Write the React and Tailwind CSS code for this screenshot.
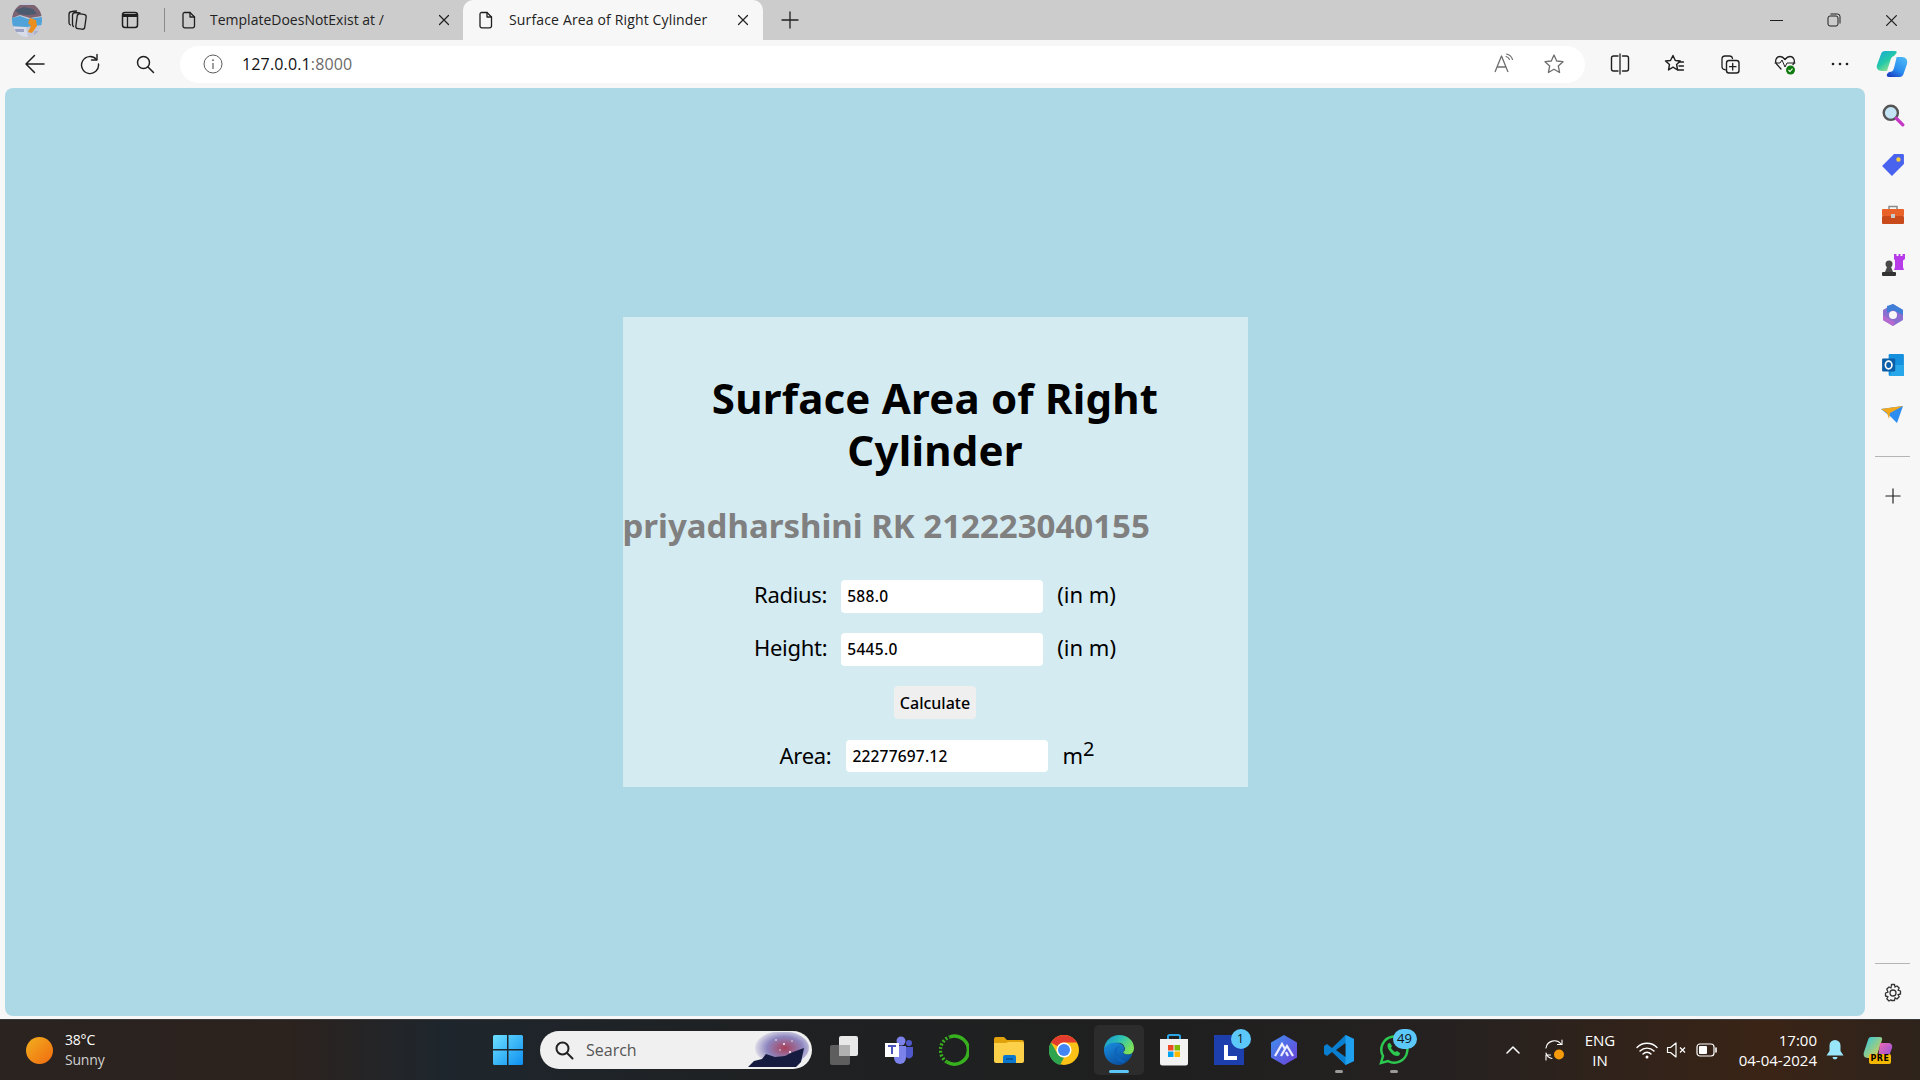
import React from "react";

const S = ({ w = 20, h = 20, vb = "0 0 20 20", children, className = "" }) => (
  <svg width={w} height={h} viewBox={vb} fill="none" className={className}>{children}</svg>
);
const line = { stroke: "#1f1f1f", strokeWidth: 1.3, strokeLinecap: "round", strokeLinejoin: "round" };

const Avatar = () => (
  <S w={30} h={34} vb="0 0 30 34">
    <defs><clipPath id="avc"><ellipse cx="15" cy="17" rx="15" ry="17" /></clipPath></defs>
    <g clipPath="url(#avc)">
      <rect width="30" height="34" fill="#c3c8d8" />
      <path d="M0 2h30v11L18 15 8 12 0 15Z" fill="#7d6372" />
      <path d="M3 7l9-3 9 2 4 5-10 1-8-1Z" fill="#4b5a6e" />
      <path d="M0 15l8-2 8 3 14-2v8L14 24 0 23Z" fill="#4fa3d8" />
      <path d="M18 15l6 2 1 6-5 7-4-1 3-6-3-3Z" fill="#ea8f1f" />
      <path d="M0 24h14l2 10H0Z" fill="#d8dbe8" />
      <path d="M3 26h9v3H3z" fill="#9aa3c4" />
      <path d="M22 28h8v6h-8z" fill="#aab0cc" />
    </g>
  </S>
);
const Collections = () => (
  <S w={24} h={24} vb="0 0 24 24">
    <rect x="11.500" y="6" width="9" height="15" rx="2.500" transform="rotate(8 16 13.500)" {...line} />
    <path d="M8.500 18.500A2.500 2.500 0 0 1 7.500 16.500V7A3 3 0 0 1 10.500 4.500L15 5" {...line} />
    <path d="M5.500 17A2.500 2.500 0 0 1 4 15V6.500A3 3 0 0 1 7 3.500L11.500 3" {...line} />
  </S>
);
const VTabs = () => (
  <S>
    <rect x="2.500" y="2.500" width="15" height="15" rx="2.500" {...line} strokeWidth="1.500" />
    <path d="M3 4h14v3H3z" fill="#1f1f1f" />
    <path d="M7.500 7v10" {...line} />
  </S>
);
const Doc = () => (
  <S>
    <path d="M5 2.500h6l4.500 4.500v9a1.800 1.800 0 0 1-1.800 1.800H5.800A1.800 1.800 0 0 1 4 16V4.300A1.800 1.800 0 0 1 5 2.500Z" {...line} />
    <path d="M11 2.500V7h4.500" {...line} />
  </S>
);
const X = ({ s = 12, c = "#1f1f1f" }) => (
  <S w={s} h={s} vb="0 0 12 12"><path d="M1.500 1.500l9 9M10.500 1.500l-9 9" stroke={c} strokeWidth="1.200" strokeLinecap="round" /></S>
);
const Plus = ({ s = 18 }) => (
  <S w={s} h={s} vb="0 0 18 18"><path d="M9 1v16M1 9h16" stroke="#1f1f1f" strokeWidth="1.300" strokeLinecap="round" /></S>
);
const Back = () => (
  <S w={22} h={22} vb="0 0 22 22"><path d="M20 11H2.500M10.500 2.500L2 11l8.500 8.500" {...line} strokeWidth="1.500" /></S>
);
const Reload = () => (
  <S w={22} h={22} vb="0 0 22 22"><path d="M17.500 6.500A8.500 8.500 0 1 0 19.500 11" {...line} strokeWidth="1.400" /><path d="M18 1.500v5.500h-5.500" {...line} strokeWidth="1.400" /></S>
);
const Search = ({ s = 20, c = "#1f1f1f", sw = 1.500 }) => (
  <S w={s} h={s} vb="0 0 20 20"><circle cx="8.500" cy="8.500" r="6" stroke={c} strokeWidth={sw} /><path d="M13 13l5.500 5.500" stroke={c} strokeWidth={sw} strokeLinecap="round" /></S>
);
const Info = () => (
  <S><circle cx="10" cy="10" r="9" stroke="#5c5c5c" strokeWidth="1" /><path d="M10 9v6" stroke="#5c5c5c" strokeWidth="1.200" /><circle cx="10" cy="6.200" r=".9" fill="#5c5c5c" /></S>
);
const ReadAloud = () => (
  <S w={22} h={22} vb="0 0 22 22">
    <path d="M2 19L8.500 3 15 19M4.500 14h8" stroke="#6e6e6e" strokeWidth="1.300" strokeLinejoin="round" />
    <path d="M13 3.500a5 5 0 0 1 3.500 3M13.500 1a8 8 0 0 1 6 5.500" stroke="#6e6e6e" strokeWidth="1.100" strokeLinecap="round" />
  </S>
);
const Star = ({ c = "#6e6e6e" }) => (
  <S w={22} h={22} vb="0 0 22 22"><path d="M11 2l2.700 6 6.300.7-4.700 4.300 1.300 6.500L11 16.200 5.400 19.500l1.300-6.500L2 8.700 8.300 8Z" stroke={c} strokeWidth="1.300" strokeLinejoin="round" /></S>
);
const Split = () => (
  <S w={22} h={22} vb="0 0 22 22"><path d="M9 3H4.500A2 2 0 0 0 2.500 5v11a2 2 0 0 0 2 2H9M13.500 3h4a2 2 0 0 1 2 2v11a2 2 0 0 1-2 2h-4" {...line} strokeWidth="1.400" /><path d="M11 1v20" {...line} /></S>
);
const Fav = () => (
  <S w={22} h={22} vb="0 0 22 22"><path d="M9 2.500l2.300 5 5 .5-3.700 3.500 1 5.500-4.600-2.800L4.500 17l1-5.500L1.500 8l5-.5Z" {...line} strokeWidth="1.400" /><path d="M14.500 9h5M15 13h4.500M14 17h5.500" {...line} /></S>
);
const Coll = () => (
  <S w={22} h={22} vb="0 0 22 22"><path d="M7 17l-1.500-.5A3 3 0 0 1 3 13V6a3 3 0 0 1 3-3h4.500a3 3 0 0 1 3 2.500" {...line} /><rect x="7.500" y="7.500" width="12.500" height="12.500" rx="2.500" {...line} strokeWidth="1.400" /><path d="M13.700 10.500v6.500M10.500 13.700H17" {...line} /></S>
);
const Heart = () => (
  <S w={24} h={24} vb="0 0 24 24">
    <path d="M8 17L4 12.500C1 9 3.500 4.500 7 4.500c2 0 3.500 1 5 3 1.500-2 3-3 5-3 3.500 0 6 4.500 3 8" {...line} />
    <path d="M2 11h5l2-3 3 7 2-4h8" {...line} strokeWidth="1" />
    <circle cx="17.500" cy="18" r="4.500" fill="#107c10" />
    <path d="M15.500 18l1.500 1.500 2.500-2.800" stroke="#fff" strokeWidth="1.100" />
  </S>
);
const Dots = () => (
  <S w={20} h={6} vb="0 0 20 6"><circle cx="3" cy="3" r="1.300" fill="#1f1f1f" /><circle cx="10" cy="3" r="1.300" fill="#1f1f1f" /><circle cx="17" cy="3" r="1.300" fill="#1f1f1f" /></S>
);
const CopilotIcon = () => (
  <S w={32} h={28} vb="0 0 32 28">
    <defs>
      <linearGradient id="cpa" x1="0" y1="0" x2="0.7" y2="1"><stop offset="0" stopColor="#1aa5dc" /><stop offset=".55" stopColor="#24c9a8" /><stop offset="1" stopColor="#a8e48a" /></linearGradient>
      <linearGradient id="cpb" x1="0.8" y1="0" x2="0.2" y2="1"><stop offset="0" stopColor="#4bb8f5" /><stop offset=".6" stopColor="#2a8cf0" /><stop offset="1" stopColor="#1c3fc0" /></linearGradient>
    </defs>
    <path d="M9 1h10c1.500 0 2 .8 1.500 2L18 6c-2 .5-3 2-3.500 4L11 21H6C2 21 0 18 1 15L5 4c.6-2 2-3 4-3Z" fill="url(#cpa)" />
    <path d="M21 7h5c4 0 6 3 5 7l-3.500 10c-.7 2-2 3-4 3H13c-2 0-2.500-1-2-3l2-2c3 0 4-1 5-4l2-8c.2-1.500.5-3 1-3Z" fill="url(#cpb)" />
  </S>
);

const WinLogo = () => (
  <S w={30} h={30} vb="0 0 30 30">
    <defs><linearGradient id="wl" x1="0" y1="0" x2="1" y2="1"><stop offset="0" stopColor="#6de0ff" /><stop offset="1" stopColor="#0d8ff0" /></linearGradient></defs>
    <path d="M1.500 0H14v14H0V1.500A1.500 1.500 0 0 1 1.500 0ZM15.500 0H28.500A1.500 1.500 0 0 1 30 1.500V14H15.500ZM0 15.500H14V30H1.500A1.500 1.500 0 0 1 0 28.500ZM15.500 15.500H30V28.500A1.500 1.500 0 0 1 28.500 30H15.500Z" fill="url(#wl)" />
  </S>
);
const SearchArt = () => (
  <S w={64} h={36} vb="0 0 64 36">
    <defs><radialGradient id="sa" cx=".55" cy=".5" r=".6"><stop offset="0" stopColor="#a8405a" /><stop offset=".55" stopColor="#8d86c0" /><stop offset="1" stopColor="#f0f0f0" /></radialGradient></defs>
    <ellipse cx="36" cy="16" rx="27" ry="17" fill="url(#sa)" />
    <path d="M2 35l6-6 8-2 4-5 9 3 10-1 8-4 11-4-3 14-5 5Z" fill="#151c3f" />
    <g fill="#fff"><circle cx="30" cy="8" r=".8" /><circle cx="38" cy="12" r="1" /><circle cx="44" cy="20" r="1" /><circle cx="46" cy="9" r=".7" /><circle cx="34" cy="18" r=".7" /></g>
  </S>
);
const TaskView = () => (
  <S w={30} h={30} vb="0 0 30 30">
    <rect x="1" y="10" width="20" height="20" rx="2" fill="#5e5e5e" />
    <rect x="10" y="1" width="19" height="20" rx="2" fill="#e8e8e8" />
    <rect x="10" y="10" width="11" height="11" fill="#b0b0b0" />
  </S>
);
const Teams = () => (
  <S w={30} h={30} vb="0 0 30 30">
    <circle cx="17" cy="6" r="4.500" fill="#7b83eb" /><circle cx="25" cy="8" r="3" fill="#5059c9" />
    <path d="M10 11h12v12a6 6 0 0 1-12 0Z" fill="#7b83eb" /><path d="M22 12h7v8a4 4 0 0 1-7 2Z" fill="#5059c9" />
    <rect x="1" y="8" width="14" height="14" fill="#fff" />
    <path d="M4 11h8M8 11v8" stroke="#4b53bc" strokeWidth="2" />
  </S>
);
const Ring = () => (
  <S w={30} h={32} vb="0 0 30 32">
    <path d="M11 2.800A14 14 0 1 1 8 28" stroke="#38b11f" strokeWidth="3.500" />
    <path d="M8 28A14 14 0 0 1 11 2.800" stroke="#38b11f" strokeWidth="3.500" strokeDasharray="2 1.800" />
  </S>
);
const Folder = () => (
  <S w={30} h={30} vb="0 0 30 30">
    <path d="M0 4a2 2 0 0 1 2-2h8l3 3h15a2 2 0 0 1 2 2v4H0Z" fill="#e0a10a" />
    <path d="M0 8h12l2-1h14a2 2 0 0 1 2 2v17a2 2 0 0 1-2 2H2a2 2 0 0 1-2-2Z" fill="#fdd04a" />
    <path d="M9 28v-6a2 2 0 0 1 2-2h9a2 2 0 0 1 2 2v6Z" fill="#0a78d0" /><path d="M12 24h7" stroke="#063a70" strokeWidth="1" />
  </S>
);
const Chrome = () => (
  <S w={30} h={30} vb="0 0 30 30">
    <circle cx="15" cy="15" r="15" fill="#fbc117" />
    <path d="M15 0A15 15 0 0 1 28 7.500H15A7.500 7.500 0 0 0 8.500 11.300L2 7.500A15 15 0 0 1 15 0Z" fill="#e33b2e" />
    <path d="M2 7.500l6.500 11.300A7.500 7.500 0 0 0 15 22.500L11 30A15 15 0 0 1 2 7.500Z" fill="#2fa44f" />
    <circle cx="15" cy="15" r="7.500" fill="#fff" /><circle cx="15" cy="15" r="6" fill="#4285f4" />
  </S>
);
const Edge = () => (
  <S w={30} h={30} vb="0 0 30 30">
    <defs>
      <linearGradient id="eg" x1="0" y1="0" x2="1" y2="0.5"><stop offset="0" stopColor="#1490d8" /><stop offset=".55" stopColor="#2fc4b0" /><stop offset="1" stopColor="#7be05a" /></linearGradient>
      <linearGradient id="ed" x1="0" y1="0" x2="0.6" y2="1"><stop offset="0" stopColor="#1a8fe0" /><stop offset="1" stopColor="#0a4f9e" /></linearGradient>
    </defs>
    <path d="M0 14C1 5 8 0 15 0c9 0 15 6 15 13 0 3-1.500 6-5 6.500-3 .4-6-.8-6-2.500 2-1 2.500-3 1.500-5C19 8 15 7 10 8.500 5 10 1.500 12 0 14Z" fill="url(#eg)" />
    <path d="M0 14c2-4 7-7 12-6.500 4 .4 7 2 8 4.500 1 2 .3 4-1 5-.5 1 3 3 6 2.500 1.500 0 2.500-.5 3.500-1.300C27 24 21 30 15 30 6 30-.5 23 0 14Z" fill="url(#ed)" />
    <path d="M10.500 17c0-4 3-6 6-5.500-3.500 1-4.500 4-3 8 1 3 4 6 8 7.500-7 2-11-5-11-10Z" fill="#0d65bd" />
  </S>
);
const Store = () => (
  <S w={30} h={32} vb="0 0 30 32">
    <path d="M9 5V2.500A1.500 1.500 0 0 1 10.500 1h9A1.500 1.500 0 0 1 21 2.500V5" stroke="#2aa5e6" strokeWidth="2" />
    <path d="M1 5h28v24a2.500 2.500 0 0 1-2.500 2.500h-23A2.500 2.500 0 0 1 1 29Z" fill="#f2f2f2" />
    <rect x="9" y="11" width="5.500" height="5.500" fill="#ea4a25" /><rect x="15.500" y="11" width="5.500" height="5.500" fill="#7fb900" />
    <rect x="9" y="17.500" width="5.500" height="5.500" fill="#00a3ee" /><rect x="15.500" y="17.500" width="5.500" height="5.500" fill="#ffb900" />
  </S>
);
const Mountain = () => (
  <S w={30} h={32} vb="0 0 30 32">
    <defs><linearGradient id="mt" x1="0" y1="0" x2="1" y2="1"><stop offset="0" stopColor="#3f8ff0" /><stop offset="1" stopColor="#6d3fd8" /></linearGradient></defs>
    <path d="M15 1l13 7.500v15L15 31 2 23.500v-15Z" fill="url(#mt)" />
    <path d="M6 22l7-12 3 5M12 22l4-7 2-3 6 10M19 22l-2-4" stroke="#eef" strokeWidth="2.200" />
  </S>
);
const VSCode = () => (
  <S w={30} h={30} vb="0 0 30 30">
    <path d="M21.500 0L30 4v22l-8.500 4L8 17l-5 4-3-2v-8l3-2 5 4Z" fill="#0a7fd0" />
    <path d="M21.500 0L30 4v22l-8.500 4Z" fill="#1fa0ee" />
    <path d="M21.500 8v14L12 15Z" fill="#1f1f1f" />
  </S>
);
const Whats = () => (
  <S w={30} h={30} vb="0 0 30 30">
    <path d="M2 28l2-7A13 13 0 1 1 9 26Z" stroke="#2cc84f" strokeWidth="2.500" />
    <path d="M10 8c-2 1-2 4 0 7 2 3 5 6 8 6 2 0 3-1 3-3l-3-2-2 1c-2-1-3-3-4-4l1-2-2-3Z" fill="#2cc84f" />
  </S>
);
const Wifi = () => (
  <S w={22} h={18} vb="0 0 22 18"><path d="M1 6.500a14 14 0 0 1 20 0M4 10a10 10 0 0 1 14 0M7 13a5.500 5.500 0 0 1 8 0" stroke="#fff" strokeWidth="1.400" strokeLinecap="round" /><circle cx="11" cy="16" r="1.500" fill="#fff" /></S>
);
const Mute = () => (
  <S w={22} h={18} vb="0 0 22 18"><path d="M1.500 6.500h3L10 2v14l-5.500-4.500h-3Z" stroke="#fff" strokeWidth="1.200" strokeLinejoin="round" /><path d="M14 6.500l5 5M19 6.500l-5 5" stroke="#fff" strokeWidth="1.200" /></S>
);
const Batt = () => (
  <S w={22} h={16} vb="0 0 22 16"><rect x="1" y="2" width="17" height="12" rx="3" stroke="#fff" strokeWidth="1.200" /><rect x="3" y="4" width="8" height="8" rx="1" fill="#fff" /><path d="M20 6v4" stroke="#fff" strokeWidth="1.600" strokeLinecap="round" /></S>
);
const Sync = () => (
  <S w={22} h={24} vb="0 0 22 24">
    <path d="M2 10A8.500 8.500 0 0 1 17 6M18 2v4.500h-4.500M2 15a8 8 0 0 0 6 5.500M2 22v-5h4.500" stroke="#fff" strokeWidth="1.100" strokeLinecap="round" />
    <circle cx="15" cy="16.500" r="5" fill="#f59a0a" />
  </S>
);
const Bell = () => (
  <S w={18} h={20} vb="0 0 18 20"><path d="M9 0a5.500 5.500 0 0 1 5.500 5.500V11l3 4.500H.500l3-4.500V5.500A5.500 5.500 0 0 1 9 0Z" fill="#99e6fb" /><path d="M6.500 17h5a2.500 2.500 0 0 1-5 0Z" fill="#99e6fb" /></S>
);
const CopilotPre = () => (
  <div className="relative w-[30px] h-[28px]">
    <S w={30} h={24} vb="0 0 30 24">
      <defs>
        <linearGradient id="cq" x1="0" y1="0" x2="1" y2="1"><stop offset="0" stopColor="#28c7e8" /><stop offset="1" stopColor="#f0d03a" /></linearGradient>
        <linearGradient id="cr" x1="0" y1="0" x2="1" y2="1"><stop offset="0" stopColor="#f06ab0" /><stop offset="1" stopColor="#8a50e0" /></linearGradient>
      </defs>
      <path d="M8 1h9c2 0 2.500 1.500 2 3l-5 15c-.5 1.500-1.500 3-3.500 3H5c-4 0-5-3-4-6L5 4c.5-2 1.500-3 3-3Z" fill="url(#cq)" />
      <path d="M17 7h8c3 0 5 2 4 5l-3 8c-.5 2-2 3-4 3h-7Z" fill="url(#cr)" />
    </S>
    <div className="absolute left-[6px] bottom-0 w-[22px] h-[10px] rounded-[2px] bg-[#f5b800] text-[8px] leading-[10px] font-bold text-black text-center tracking-[0.5px] font-['DejaVu_Sans',sans-serif]">PRE</div>
  </div>
);

const SideIcons = [
  <S w={24} h={24} vb="0 0 22 22" key="a"><circle cx="9" cy="9" r="6.500" fill="#c3e4f5" stroke="#555" strokeWidth="2.200" /><path d="M14 14l6 6" stroke="#c436c4" strokeWidth="3" strokeLinecap="round" /></S>,
  <S w={24} h={24} vb="0 0 22 22" key="b"><path d="M12 1h8a1 1 0 0 1 1 1v8L10 21 1 12Z" fill="#4a63ee" /><circle cx="16" cy="6" r="2" fill="#f6cf3a" /></S>,
  <S w={24} h={22} vb="0 0 24 22" key="c"><path d="M8 5V2.500h8V5" stroke="#8a8a8a" strokeWidth="1.500" /><rect x="1" y="5" width="22" height="7" rx="1" fill="#e8622a" /><rect x="1" y="12" width="22" height="8" rx="1" fill="#c94a1a" /><rect x="10" y="10" width="4" height="4" fill="#c9c9c9" /></S>,
  <S w={24} h={24} vb="0 0 24 24" key="d"><path d="M13 1h2.500v2h2V1h2v2h2V1H24v5l-2 1.500V14l1 3H13l1-3V7.500L13 6Z" fill="#b73be8" /><circle cx="8" cy="11" r="3.500" fill="#4a4a4a" /><path d="M6 14h4l2 5H4Z" fill="#4a4a4a" /><rect x="1" y="19" width="14" height="4" rx="1" fill="#333" /></S>,
  <S w={24} h={24} vb="0 0 22 24" key="e"><path d="M11 1l10 6v10l-10 6L1 17V7Z" fill="#8a6fd0" /><path d="M11 1l10 6v5L11 7 5 10V3Z" fill="#3f7fd8" /><path d="M1 12l6 4 6 3-2 4-10-6Z" fill="#b66ad0" /><circle cx="11" cy="12" r="4" fill="#f7f7f7" /></S>,
  <S w={24} h={24} vb="0 0 22 22" key="f"><rect x="7" y="1" width="14" height="20" rx="1" fill="#1490df" /><path d="M12 11h9v10H8Z" fill="#28a8ea" /><rect x="1" y="5" width="12" height="12" rx="1" fill="#0a5fa8" /><ellipse cx="7" cy="11" rx="3" ry="3.500" stroke="#fff" strokeWidth="1.500" /></S>,
  <S w={24} h={20} vb="0 0 24 20" key="g"><path d="M0 4l22-3-6 17-6-6Z" fill="#2e8df0" /><path d="M0 4l22-3L9 8l-1 6-2-6Z" fill="#f3a81c" /></S>,
];

const Slot = ({ w, children, className = "" }) => (
  <div style={{ width: w }} className={`flex items-center justify-center shrink-0 ${className}`}>{children}</div>
);

const Badge = ({ children, className = "" }) => (
  <div className={`absolute bg-[#5cc8fa] rounded-full h-[20px] flex items-center justify-center text-[12px] text-[#111] font-['Open_Sans',sans-serif] ${className}`}>{children}</div>
);

const Row = ({ label, value, unit }) => (
  <div className="flex items-center justify-center h-[32px] text-[#000] text-[22px]">
    <span className="-mt-[4px] tracking-[-0.3px]">{label}</span>
    <div className="ml-[14px] w-[202px] h-[33px] bg-white rounded-[4px] flex items-center pl-[6px] pt-[1px] text-[15.5px] tracking-[0.3px] font-medium">{value}</div>
    <span className="ml-[14px] -mt-[4px]">{unit}</span>
  </div>
);

export default function App() {
  return (
    <div className="w-[1920px] h-[1080px] overflow-hidden flex flex-col bg-[#f7f7f7] font-['Open_Sans',sans-serif]">
      {/* tab strip */}
      <div className="h-[40px] bg-[#cccccc] flex items-center shrink-0 relative">
        <Slot w={54}><Avatar /></Slot>
        <Slot w={46}><Collections /></Slot>
        <Slot w={60}><VTabs /></Slot>
        <div className="w-px h-[24px] bg-[#8a8a8a] ml-[4px]" />
        <div className="w-[296px] h-full flex items-center pl-[14px] text-[14px] text-[#222] -mt-[1px]">
          <Doc /><span className="ml-[11px]">TemplateDoesNotExist at /</span>
          <span className="ml-auto mr-[11px]"><X /></span>
        </div>
        <div className="w-[300px] h-full flex items-center pl-[13px] ml-[2px] bg-[#f7f7f7] rounded-t-[10px] text-[14px] text-[#222] tracking-[0.15px]">
          <Doc /><span className="ml-[13px] -mt-[1px]">Surface Area of Right Cylinder</span>
          <span className="ml-auto mr-[14px]"><X /></span>
        </div>
        <div className="ml-[18px]"><Plus /></div>
        <div className="ml-auto flex items-center">
          <Slot w={57}><div className="w-[13px] h-px bg-[#1f1f1f]" /></Slot>
          <Slot w={57}>
            <S w={14} h={14} vb="0 0 14 14"><rect x="1" y="3" width="10" height="10" rx="2" stroke="#1f1f1f" strokeWidth="1" /><path d="M3.500 1h7a2.500 2.500 0 0 1 2.500 2.500v7" stroke="#1f1f1f" strokeWidth="1" /></S>
          </Slot>
          <Slot w={58}><X s={13} /></Slot>
        </div>
      </div>

      {/* toolbar */}
      <div className="h-[48px] flex items-center shrink-0 pl-[7px]">
        <Slot w={55}><Back /></Slot>
        <Slot w={56}><Reload /></Slot>
        <Slot w={54}><Search /></Slot>
        <div className="ml-[8px] w-[1405px] h-[37px] bg-white rounded-full flex items-center pl-[23px] pr-[20px]">
          <Info />
          <span className="ml-[19px] text-[16px] tracking-[0.15px] text-[#111] -mt-[1px]">127.0.0.1<span className="text-[#6b6b6b]">:8000</span></span>
          <div className="ml-auto flex items-center gap-[28px]"><ReadAloud /><Star /></div>
        </div>
        <div className="ml-[7px] flex items-center">
          <Slot w={55}><Split /></Slot>
          <Slot w={55}><Fav /></Slot>
          <Slot w={55}><Coll /></Slot>
          <Slot w={55}><Heart /></Slot>
          <Slot w={55}><Dots /></Slot>
          <Slot w={50}><CopilotIcon /></Slot>
        </div>
      </div>

      {/* content + sidebar */}
      <div className="flex-1 flex min-h-0">
        <div className="ml-[5px] w-[1860px] h-[928px] bg-[#add8e6] rounded-[8px] flex items-center justify-center font-['Noto_Sans',sans-serif]">
          <div className="w-[625px] h-[470px] bg-[#d5ebf2] pt-[55px] flex flex-col">
            <h1 className="text-[42px] leading-[52px] font-bold text-black text-center px-[60px] tracking-[0.2px]">Surface Area of Right Cylinder</h1>
            <h2 className="mt-[30px] text-[33px] leading-[40px] font-bold text-[#808080]">priyadharshini RK 212223040155</h2>
            <div className="mt-[34px] flex flex-col gap-[21px]">
              <Row label="Radius:" value="588.0" unit="(in m)" />
              <Row label="Height:" value="5445.0" unit="(in m)" />
              <div className="flex justify-center">
                <div className="w-[82px] h-[33px] bg-[#efefef] rounded-[4px] flex items-center justify-center text-[16px] font-medium text-black">Calculate</div>
              </div>
              <div className="flex items-center justify-center h-[32px] pl-[4px] text-black text-[22px]">
                <span className="-mt-[1px] tracking-[-0.3px]">Area:</span>
                <div className="ml-[15px] w-[202px] h-[32px] bg-white rounded-[4px] flex items-center pl-[6px] pt-[1px] text-[15.5px] tracking-[0.2px] font-medium">22277697.12</div>
                <span className="ml-[14px] -mt-[1px]">m<sup className="text-[20px] leading-none relative -top-[8px] align-baseline">2</sup></span>
              </div>
            </div>
          </div>
        </div>
        <div className="w-[55px] flex flex-col items-center">
          <div className="h-[931px] flex flex-col items-center pt-[2px]">
            {SideIcons.map((ic, i) => (
              <div key={i} className="h-[50px] w-[55px] flex items-center justify-center">{ic}</div>
            ))}
            <div className="mt-[16px] w-[35px] h-px bg-[#b5b5b5]" />
            <div className="mt-[31px]"><Plus s={16} /></div>
            <div className="mt-auto w-[35px] h-px bg-[#b5b5b5]" />
            <div className="mt-[19px] mb-[16px]">
              <S w={20} h={20} vb="0 0 20 20"><circle cx="10" cy="10" r="3" stroke="#333" strokeWidth="1.300" /><path d="M8.500 1.500h3l.5 2.500 2-1 2.200 2-1.200 2.200 2.500.8v3l-2.500.6 1.200 2.200-2.200 2.200-2-1.200-.5 2.700h-3L8 16.800l-2 1.200-2.200-2.200 1.200-2.200-2.500-.6v-3l2.500-.8L3.800 6l2.200-2 2 1Z" stroke="#333" strokeWidth="1.300" strokeLinejoin="round" /></S>
            </div>
          </div>
        </div>
      </div>

      {/* taskbar */}
      <div className="h-[61px] shrink-0 border-t border-[#3a3a3a] flex items-center text-white bg-[linear-gradient(90deg,#2a2320_0%,#2c221e_15%,#1e262d_23%,#1f2122_40%,#1f1f1f_60%,#252120_75%,#3a2416_92%,#2e231c_100%)]">
        <div className="ml-[26px] w-[27px] h-[27px] rounded-full bg-[linear-gradient(135deg,#f2b01e,#f06a10)] shrink-0" />
        <div className="ml-[12px] w-[428px] text-[14px] leading-[20px] shrink-0">
          <div className="tracking-[-0.2px]">38°C</div>
          <div className="text-[#d0d0d0] tracking-[-0.2px]">Sunny</div>
        </div>
        <div className="shrink-0"><WinLogo /></div>
        <div className="ml-[17px] w-[272px] h-[38px] bg-[#f0f0f0] rounded-full flex items-center pl-[14px] text-[16px] text-[#555] overflow-hidden shrink-0">
          <Search s={20} c="#222" sw={2} />
          <span className="ml-[12px]">Search</span>
          <span className="ml-auto mr-[2px]"><SearchArt /></span>
        </div>
        <Slot w={58} className="ml-[3px]"><TaskView /></Slot>
        <Slot w={55} className="ml-[-2px]"><Teams /></Slot>
        <Slot w={55}><Ring /></Slot>
        <Slot w={55}><Folder /></Slot>
        <Slot w={55}><Chrome /></Slot>
        <Slot w={55}>
          <div className="relative w-[50px] h-[50px] rounded-[5px] bg-[#2c2c2c] flex items-center justify-center">
            <Edge />
            <div className="absolute bottom-[2px] left-[15px] w-[20px] h-[3px] rounded bg-[#5cc8fa]" />
          </div>
        </Slot>
        <Slot w={55}><Store /></Slot>
        <Slot w={55}>
          <div className="relative w-[30px] h-[30px] bg-[#1d3fae]">
            <div className="absolute left-[10px] top-[10px] w-[4px] h-[15px] bg-white" />
            <div className="absolute left-[10px] top-[21px] w-[13px] h-[4px] bg-white" />
            <Badge className="w-[20px] -top-[6px] left-[17px]">1</Badge>
          </div>
        </Slot>
        <Slot w={55}><Mountain /></Slot>
        <Slot w={55}>
          <div className="relative"><VSCode /><div className="absolute -bottom-[8px] left-[11px] w-[8px] h-[3px] rounded bg-[#9a9a9a]" /></div>
        </Slot>
        <Slot w={55}>
          <div className="relative"><Whats />
            <Badge className="w-[24px] -top-[6px] left-[14px] text-[13px]">49</Badge>
            <div className="absolute -bottom-[8px] left-[11px] w-[8px] h-[3px] rounded bg-[#9a9a9a]" />
          </div>
        </Slot>
        <Slot w={40} className="ml-[72px]">
          <S w={16} h={10} vb="0 0 16 10"><path d="M2 8l6-6 6 6" stroke="#fff" strokeWidth="1.500" strokeLinecap="round" strokeLinejoin="round" /></S>
        </Slot>
        <Slot w={40} className="ml-[2px]"><Sync /></Slot>
        <div className="ml-[1px] w-[48px] text-center text-[15px] leading-[20px] shrink-0"><div>ENG</div><div>IN</div></div>
        <Slot w={30} className="ml-[8px]"><Wifi /></Slot>
        <Slot w={30}><Mute /></Slot>
        <Slot w={30}><Batt /></Slot>
        <div className="w-[95px] text-right text-[15px] leading-[20px] shrink-0"><div>17:00</div><div>04-04-2024</div></div>
        <Slot w={36}><Bell /></Slot>
        <Slot w={50}><CopilotPre /></Slot>
      </div>
    </div>
  );
}
